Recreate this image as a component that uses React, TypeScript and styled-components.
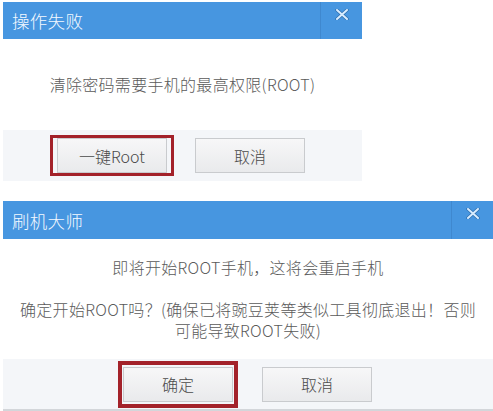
import React from "react";
import styled, { createGlobalStyle } from "styled-components";

const Global = createGlobalStyle`
  html, body {
    margin: 0;
    padding: 0;
    background: #ffffff;
    overflow: hidden;
  }
  body {
    font-family: "Noto Sans CJK SC", "Noto Sans", sans-serif;
  }
`;

const Page = styled.div`
  width: 493px;
  height: 411px;
  padding: 2px 0 0 3px;
  box-sizing: border-box;
  display: flex;
  flex-direction: column;
  gap: 20px;
`;

const Dialog = styled.div<{ $width: number }>`
  width: ${(p) => p.$width}px;
  display: flex;
  flex-direction: column;
  background: #ffffff;
`;

const Header = styled.div<{ $height: number }>`
  height: ${(p) => p.$height}px;
  background: #4796e0;
  display: flex;
  align-items: stretch;
`;

const Title = styled.div`
  flex: 1;
  padding-left: 9px;
  display: flex;
  align-items: center;
  color: #f4f9ff;
  font-size: 17.5px;
  font-weight: 300;
  letter-spacing: 0.3px;
`;

const Close = styled.div`
  width: 42px;
  border-left: 1px solid #3f88cf;
  display: flex;
  justify-content: center;
  padding-top: 7px;
  box-sizing: border-box;
`;

const Body = styled.div<{ $height: number }>`
  height: ${(p) => p.$height}px;
  display: flex;
  flex-direction: column;
  align-items: center;
  justify-content: center;
  text-align: center;
  color: #5a5a5a;
  font-size: 16px;
  font-weight: 300;
  letter-spacing: 0.3px;
`;

const Line = styled.div<{ $gapAfter?: boolean }>`
  line-height: 21px;
  margin-bottom: ${(p) => (p.$gapAfter ? "21px" : "0")};
`;

const Footer = styled.div<{ $height: number; $left: number; $gap: number; $line?: boolean }>`
  height: ${(p) => p.$height}px;
  background: #f4f6f9;
  display: flex;
  align-items: center;
  padding-left: ${(p) => p.$left}px;
  gap: ${(p) => p.$gap}px;
  border-bottom: ${(p) => (p.$line ? "2px solid #d3d6da" : "none")};
`;

const Highlight = styled.div<{ $border: number; $pad: string }>`
  border: ${(p) => p.$border}px solid #a3222a;
  padding: ${(p) => p.$pad};
  display: flex;
`;

const Button = styled.div`
  width: 110px;
  height: 35px;
  box-sizing: border-box;
  border: 1px solid #c9cbce;
  background: linear-gradient(#f7f7f8, #e9eaec);
  color: #4a4a4a;
  font-size: 16px;
  font-weight: 300;
  display: flex;
  align-items: center;
  justify-content: center;
`;

const CloseIcon = () => (
  <svg width="14" height="11" viewBox="0 0 14 11">
    <path d="M2 1 L12 10 M12 1 L2 10" stroke="#2f6fae" strokeWidth="3.4" strokeLinecap="round" />
    <path d="M2 1 L12 10 M12 1 L2 10" stroke="#d7ecff" strokeWidth="2" strokeLinecap="round" />
  </svg>
);

export default function App() {
  return (
    <>
      <Global />
      <Page>
        <Dialog $width={359}>
          <Header $height={37}>
            <Title>操作失败</Title>
            <Close>
              <CloseIcon />
            </Close>
          </Header>
          <Body $height={91}>
            <Line>清除密码需要手机的最高权限(ROOT)</Line>
          </Body>
          <Footer $height={51} $left={47} $gap={21}>
            <Highlight $border={3} $pad="0 4px">
              <Button>一键Root</Button>
            </Highlight>
            <Button>取消</Button>
          </Footer>
        </Dialog>
        <Dialog $width={490}>
          <Header $height={38}>
            <Title>刷机大师</Title>
            <Close>
              <CloseIcon />
            </Close>
          </Header>
          <Body $height={120}>
            <Line $gapAfter>即将开始ROOT手机，这将会重启手机</Line>
            <Line>确定开始ROOT吗？(确保已将豌豆荚等类似工具彻底退出！否则</Line>
            <Line>可能导致ROOT失败)</Line>
          </Body>
          <Footer $height={50} $left={115} $gap={24} $line>
            <Highlight $border={4} $pad="2px 1px">
              <Button>确定</Button>
            </Highlight>
            <Button>取消</Button>
          </Footer>
        </Dialog>
      </Page>
    </>
  );
}
